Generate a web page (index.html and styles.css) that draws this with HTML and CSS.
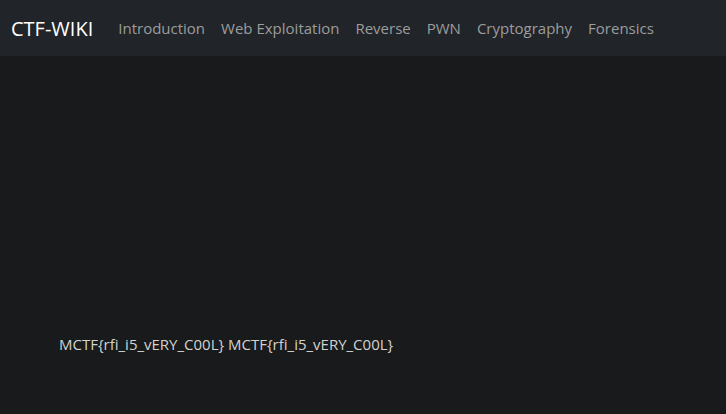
FILE: index.html
```
<!DOCTYPE html>
<html>
<head>
<meta charset="utf-8">
<link rel="stylesheet" href="styles.css">
</head>
<body>
<nav class="navbar">
  <a class="brand">CTF-WIKI</a>
  <ul class="links">
    <li>Introduction</li>
    <li>Web Exploitation</li>
    <li>Reverse</li>
    <li>PWN</li>
    <li>Cryptography</li>
    <li>Forensics</li>
  </ul>
</nav>
<main class="content">
  <p class="flag">MCTF{rfi_i5_vERY_C00L} MCTF{rfi_i5_vERY_C00L}</p>
</main>
</body>
</html>
```
FILE: styles.css
```
html, body {
  margin: 0;
  padding: 0;
  background: #181a1b;
  font-family: "Open Sans", "Noto Sans", sans-serif;
  height: 100%;
}
.navbar {
  display: flex;
  align-items: center;
  height: 56px;
  background: #212428;
  padding: 0 11px;
  box-sizing: border-box;
}
.brand {
  color: #ffffff;
  font-size: 20px;
  margin-right: 25px;
}
.links {
  display: flex;
  list-style: none;
  margin: 0;
  padding: 0;
  gap: 16px;
}
.links li {
  color: #9b9d9e;
  font-size: 15px;
}
.content {
  padding: 278px 59px 0;
}
.flag {
  margin: 0;
  color: #d4d2cf;
  font-size: 15px;
}
```
